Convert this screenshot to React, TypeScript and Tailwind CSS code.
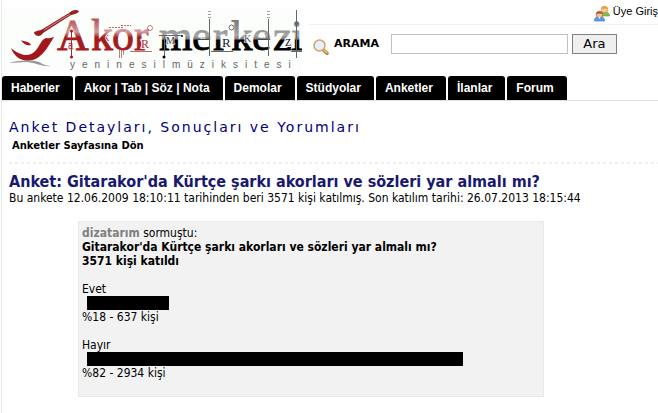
import { useState } from 'react';

interface Secenek {
  ad: string;
  yuzde: number;
  kisi: number;
}

const menu = ["Haberler", "Akor | Tab | Söz | Nota", "Demolar", "Stüdyolar", "Anketler", "İlanlar", "Forum"];

const secenekler: Secenek[] = [
  { ad: "Evet", yuzde: 18, kisi: 637 },
  { ad: "Hayır", yuzde: 82, kisi: 2934 },
];

function Logo() {
  return (
    <svg width="298" height="66" viewBox="4 7 298 66" role="img" aria-label="Akor Merkezi" className="block shrink-0">
      <defs>
        <linearGradient id="kirmizi" gradientUnits="userSpaceOnUse" x1="0" y1="20" x2="0" y2="51">
          <stop offset="0" stopColor="#b9565a" />
          <stop offset="0.38" stopColor="#d49a9b" />
          <stop offset="0.5" stopColor="#b04a4d" />
          <stop offset="0.55" stopColor="#a01c20" />
          <stop offset="1" stopColor="#a81c20" />
        </linearGradient>
        <linearGradient id="siyah" gradientUnits="userSpaceOnUse" x1="0" y1="20" x2="0" y2="51">
          <stop offset="0" stopColor="#777" />
          <stop offset="0.5" stopColor="#a5a5a5" />
          <stop offset="0.62" stopColor="#777" />
          <stop offset="0.64" stopColor="#000" />
          <stop offset="1" stopColor="#000" />
        </linearGradient>
      </defs>
      <rect x="4" y="7" width="298" height="66" fill="#fcfefb" />

      {/* saz */}
      <path d="M11 48 C17 53 25 57 31 54 C40 50 40 38 47 38 C50 39 52 37 54 37 C49 45 43 57 33 60 C23 63 14 57 11 48 Z" fill="#a3171c" />
      <path d="M21 40 C25 42 29 41 31 45 C27 46 23 44 21 40 Z" fill="#a3171c" />
      <path d="M34 33 C34 31 38 31 41 30 L69 13 C72 10 76 9 79 11 C78 14 74 14 71 15 L43 33 C41 37 36 37 34 33 Z" fill="#9c1d21" />
      <path d="M44 30 L70 14" stroke="#d08c8e" strokeWidth="1" />
      <path d="M9 63 C20 60 31 60 39 62 C44 65 48 66 52 66 C42 67 37 63 27 62 C20 62 15 63 9 63 Z" fill="#999" />

      <g fontFamily="'Liberation Serif', serif">
        <text x="57 91 112 134" y="50" fontSize="44" fill="url(#kirmizi)" stroke="url(#kirmizi)" strokeWidth="0.8">Akor</text>
        <text x="159 192 213 231 252 273 291" y="50" fontSize="43" fill="url(#siyah)" stroke="url(#siyah)" strokeWidth="0.8">merkezi</text>
        <text x="68" y="49" fontSize="12" fill="#fff" stroke="#a3171c" strokeWidth="0.4">a</text>
        <text x="103" y="41" fontSize="9" fill="#a3171c">K</text>
        <text x="141" y="48" fontSize="12" fill="#b03035" stroke="#fcfefb" strokeWidth="2" paintOrder="stroke">R</text>
        <text x="166" y="44" fontSize="10" fill="#444" stroke="#fcfefb" strokeWidth="1" paintOrder="stroke">M</text>
        <text x="200" y="39" fontSize="9" fill="#fff">E</text>
        <text x="222" y="47" fontSize="13" fill="#222" stroke="#fcfefb" strokeWidth="2" paintOrder="stroke">R</text>
        <text x="244" y="42" fontSize="10" fill="#555" stroke="#fcfefb" strokeWidth="1" paintOrder="stroke">K</text>
        <text x="260" y="38" fontSize="9" fill="#fff">E</text>
        <text x="285" y="46" fontSize="10" fill="#000" stroke="#fcfefb" strokeWidth="2" paintOrder="stroke">Z</text>
      </g>

      <g stroke="#a02a2e" fill="none">
        <path d="M71.500 30V58" />
        <path d="M109 27.500H123M121 25.500H131" strokeDasharray="2 1" opacity="0.7" />
        <path d="M130 51.500H152" opacity="0.7" />
        <path d="M119.500 48V58M121.500 48V58M123.500 48V55" opacity="0.6" />
        <circle cx="150" cy="28" r="2.500" opacity="0.6" />
      </g>
      <circle cx="71.500" cy="57" r="1.500" fill="#a3171c" />
      <circle cx="71.500" cy="31" r="1.500" fill="#a3171c" />
      <g stroke="#666" fill="none">
        <path d="M159 35.500H181M164.500 37V57M209.500 19V56M268.500 19V56M211 51.500H233M291 51.500H302M296.500 10V58" />
        <path d="M208 11.500H211M208 14.500H211M208 17.500H211M267 11.500H270M267 14.500H270M267 17.500H270" opacity="0.6" />
        <circle cx="231.500" cy="27.500" r="2.500" />
        <circle cx="296.500" cy="23" r="1.500" />
      </g>
      <circle cx="164" cy="57" r="1.500" fill="#000" />
      <circle cx="182" cy="36" r="1" fill="#000" />

      <text x="70" y="68" fontSize="10" letterSpacing="7" fill="#666" fontFamily="'Liberation Sans', sans-serif">yeninesilmüziksitesi</text>
    </svg>
  );
}

function UyeIkon() {
  return (
    <svg width="16" height="17" viewBox="0 0 16 17" aria-hidden="true">
      <path d="M6 11 C6 8 8 7 11 7 C14 7 15.500 8 15.500 11 Z" fill="#7cc04b" stroke="#5a9a35" strokeWidth="0.6" />
      <circle cx="10.500" cy="4.500" r="3.300" fill="#f8c79a" stroke="#c47a2c" strokeWidth="0.5" />
      <path d="M7 4.500 C7 0 14 0 14 4.500 C12 3.500 10 3 7 4.500 Z" fill="#eaa22e" />
      <path d="M0.500 16 C0.500 12.500 2.500 11.500 5.500 11.500 C8.500 11.500 10.500 12.500 10.500 16 Z" fill="#5b9fe8" stroke="#2d6fc0" strokeWidth="0.6" />
      <circle cx="5.500" cy="9.500" r="3.300" fill="#f4bf98" stroke="#a0522d" strokeWidth="0.5" />
      <path d="M2 9.500 C2 5 9 5 9 9.500 C7 8.300 5 8 2 9.500 Z" fill="#a85a32" />
      <path d="M4.500 12 L5.500 14 L6.500 12 Z" fill="#fff" />
    </svg>
  );
}

function AramaIkon() {
  return (
    <svg width="16" height="16" viewBox="0 0 16 16" aria-hidden="true">
      <path d="M10.500 11 L14 14.200" stroke="#b98242" strokeWidth="3.500" strokeLinecap="round" />
      <path d="M11 11 L13.800 13.600" stroke="#eec27e" strokeWidth="1.500" strokeLinecap="round" />
      <circle cx="6.500" cy="6.500" r="5.500" fill="#e6f0fb" stroke="#d3a567" strokeWidth="1.500" />
    </svg>
  );
}

export default function AnketSayfasi() {
  const [arama, setArama] = useState("");

  return (
    <div className="ml-px min-h-screen border-l border-[#e8e8e8] bg-white font-['DejaVu_Sans_Condensed','DejaVu_Sans',sans-serif] text-xs leading-[14px] text-black">
      <header className="flex pl-0.5 pt-[7px]">
        <Logo />
        <div className="-mt-[7px] ml-1.5 min-w-0 flex-1">
          <div className="flex h-[25px] items-start justify-end border-b border-[#f0f0f0] pt-[5px]">
            <a href="#uye" className="flex gap-[3px] whitespace-nowrap font-['Liberation_Sans',sans-serif] text-[11px] leading-3">
              <UyeIkon />
              Üye Giriş
            </a>
          </div>
          <form className="flex items-center pl-[5px] pt-2" onSubmit={(e) => e.preventDefault()}>
            <label htmlFor="arama" className="flex items-center gap-[5px] font-['DejaVu_Sans',sans-serif] text-[11px] font-bold">
              <span className="pt-1.5"><AramaIkon /></span>
              ARAMA
            </label>
            <input id="arama" type="text" value={arama} onChange={(e) => setArama(e.target.value)} className="ml-3 h-5 w-[177px] border border-[#c0c0c0] bg-white px-1" />
            <button type="submit" className="ml-1 h-5 w-[45px] border border-[#808080] bg-[#efefef] font-['DejaVu_Sans',sans-serif] text-[13px] leading-4">Ara</button>
          </form>
        </div>
      </header>

      <nav className="mt-[3px] flex gap-0.5 border-b border-[#e0e0e0] font-['Liberation_Sans',sans-serif] font-bold text-white">
        {menu.map((m) => (
          <a key={m} href="#menu" className="h-6 whitespace-nowrap rounded-t-[3px] bg-black pl-[9px] pr-[13px] leading-6">{m}</a>
        ))}
      </nav>

      <main className="pl-[7px]">
        <h1 className="pt-[18px] font-['DejaVu_Sans',sans-serif] text-sm leading-4 tracking-[2px] text-[#000080]">Anket Detayları, Sonuçları ve Yorumları</h1>
        <a href="#anketler" className="ml-[3px] mt-1 block font-['DejaVu_Sans',sans-serif] text-[10px] font-bold leading-[14px]">Anketler Sayfasına Dön</a>
        <div className="mt-[9px] h-0.5 bg-[repeating-linear-gradient(to_right,#eee_0_3px,transparent_3px_6px)]" />

        <h2 className="mt-[9px] text-base font-bold leading-[18px] text-[#191970]">Anket: Gitarakor'da Kürtçe şarkı akorları ve sözleri yar almalı mı?</h2>
        <p>Bu ankete 12.06.2009 18:10:11 tarihinden beri 3571 kişi katılmış. Son katılım tarihi: 26.07.2013 18:15:44</p>

        <section className="ml-[69px] mt-4 max-w-[466px] border border-[#e9e9e9] bg-[#f2f2f2] px-[3px] pb-4 pt-1">
          <p><a href="#dizatarim" className="font-bold text-[#808080]">dizatarım</a> sormuştu:</p>
          <p className="font-bold">Gitarakor'da Kürtçe şarkı akorları ve sözleri yar almalı mı?</p>
          <p className="font-bold">3571 kişi katıldı</p>
          {secenekler.map((s) => (
            <div key={s.ad} className="mt-3.5">
              <p>{s.ad}</p>
              <div className="ml-[5px] h-3.5 bg-black" style={{ width: `${s.yuzde}%` }} />
              <p>%{s.yuzde} - {s.kisi} kişi</p>
            </div>
          ))}
        </section>
      </main>
    </div>
  );
}
